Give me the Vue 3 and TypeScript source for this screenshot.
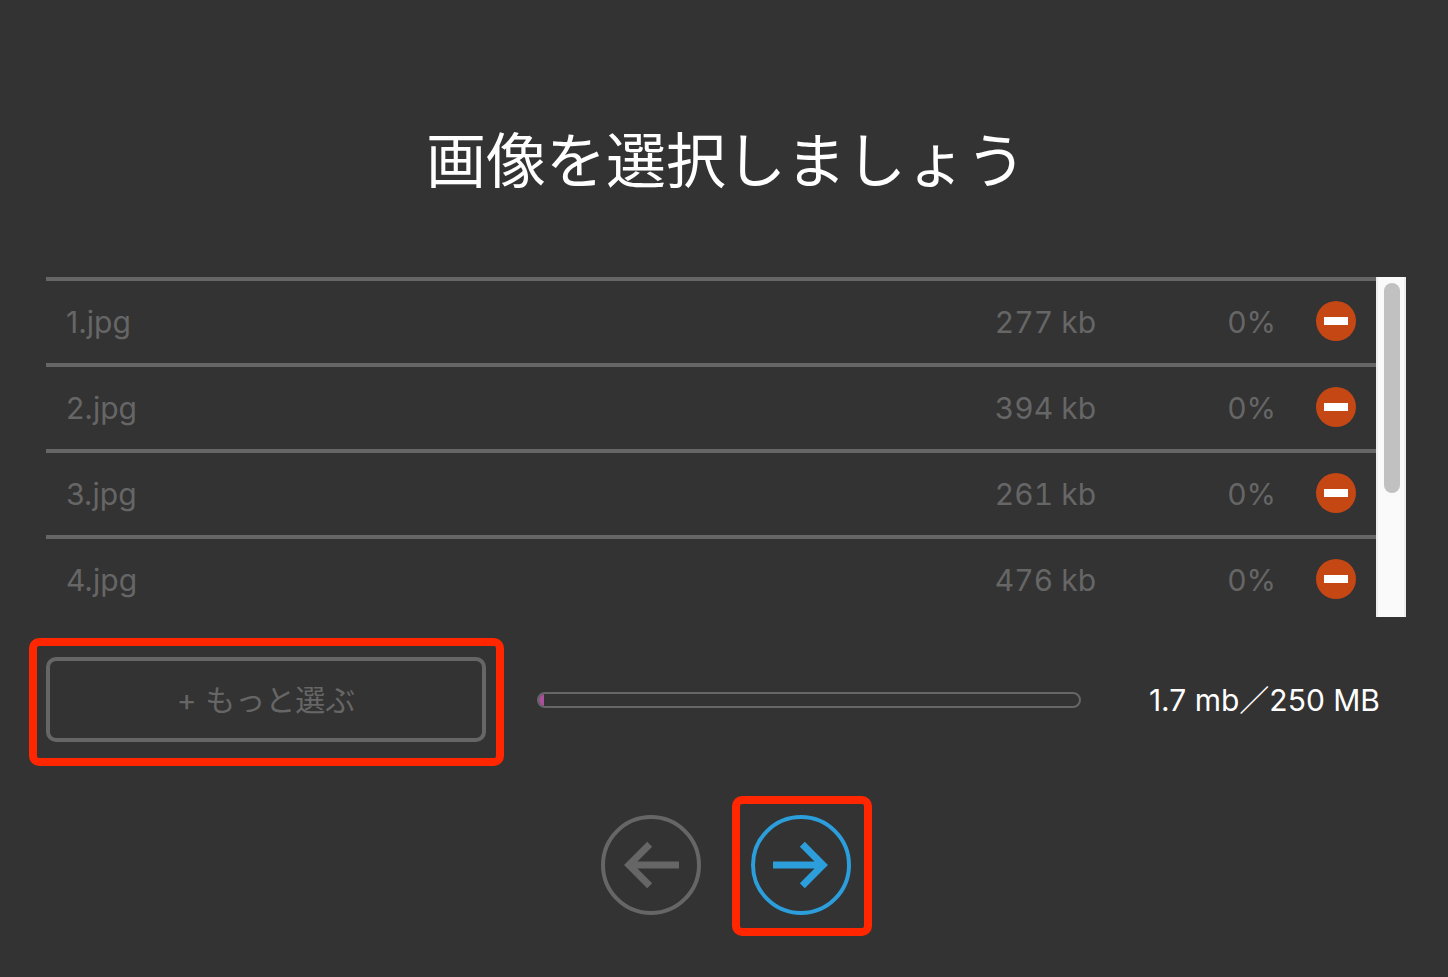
<script setup lang="ts">
interface UploadFile {
  name: string
  size: string
  progress: number
}

const files: UploadFile[] = [
  { name: '1.jpg', size: '277 kb', progress: 0 },
  { name: '2.jpg', size: '394 kb', progress: 0 },
  { name: '3.jpg', size: '261 kb', progress: 0 },
  { name: '4.jpg', size: '476 kb', progress: 0 },
]

const usedMb = 1.7
const limitMb = 250
const usedPercent = (usedMb / limitMb) * 100
</script>

<template>
  <main class="page">
    <h1 class="title">画像を選択しましょう</h1>

    <section class="list">
      <div class="list-view">
        <table class="files">
          <tbody>
            <tr v-for="file in files" :key="file.name">
              <td class="name">{{ file.name }}</td>
              <td class="size">{{ file.size }}</td>
              <td class="percent">{{ file.progress }}%</td>
              <td class="action">
                <button type="button" class="remove" :aria-label="file.name">
                  <svg viewBox="0 0 40 40" aria-hidden="true">
                    <circle cx="20" cy="20" r="20" fill="#c54714" />
                    <rect x="8" y="16" width="24" height="8" fill="#fff" />
                  </svg>
                </button>
              </td>
            </tr>
          </tbody>
        </table>
      </div>
      <div class="track" aria-hidden="true"><div class="thumb"></div></div>
    </section>

    <section class="summary">
      <div class="marked marked-more">
        <button type="button" class="more">+ もっと選ぶ</button>
      </div>
      <div class="meter">
        <div class="meter-fill" :style="{ width: usedPercent + '%' }"></div>
      </div>
      <p class="total">{{ usedMb }} mb／{{ limitMb }} MB</p>
    </section>

    <nav class="steps">
      <button type="button" class="step" aria-label="戻る">
        <svg viewBox="0 0 100 100" aria-hidden="true">
          <circle cx="50" cy="50" r="48" stroke-width="4" />
          <path d="M48.7 29.3 28 50l20.7 20.7M30 50h48" stroke-width="7" />
        </svg>
      </button>
      <div class="marked marked-next">
        <button type="button" class="step next" aria-label="次へ">
          <svg viewBox="0 0 100 100" aria-hidden="true">
            <circle cx="50" cy="50" r="48" stroke-width="4" />
            <path d="M51.3 29.3 72 50 51.3 70.7M70 50H22" stroke-width="7" />
          </svg>
        </button>
      </div>
    </nav>
  </main>
</template>

<style>
body {
  margin: 0;
  background: #333;
}
</style>

<style scoped>
.page {
  box-sizing: border-box;
  min-height: 100vh;
  padding: 121px 42px 60px 46px;
  background: #333;
  color: #666;
  font-family: Inter, "Noto Sans CJK JP", sans-serif;
  font-size: 30px;
  line-height: 40px;
}

.title {
  margin: 0 0 76px;
  color: #fff;
  font-size: 60px;
  font-weight: 400;
  line-height: 80px;
  text-align: center;
}

.list {
  display: flex;
  height: 340px;
}

.list-view {
  flex: 1;
  overflow-y: auto;
  scrollbar-width: none;
}

.files {
  width: 100%;
  border-collapse: separate;
  border-spacing: 0;
}

.files td {
  height: 82px;
  padding: 0;
  border-top: 4px solid #666;
}

.files .name {
  padding-left: 20px;
}

.size,
.percent {
  width: 180px;
  text-align: right;
}

.size {
  font-variant-numeric: tabular-nums;
}

.files .action {
  width: 100px;
  height: 80px;
  padding-bottom: 2px;
}

.remove {
  display: block;
  width: 40px;
  height: 40px;
  margin-left: 40px;
  padding: 0;
  border: 0;
  background: none;
  cursor: pointer;
}

.remove svg,
.step svg {
  display: block;
  width: 100%;
  height: 100%;
}

.track {
  box-sizing: border-box;
  width: 30px;
  padding: 6px;
  border: 0 solid #ededed;
  border-width: 0 2px;
  background: #fafafa;
}

.thumb {
  width: 16px;
  height: 210px;
  border-radius: 8px;
  background: #c1c1c1;
}

.summary {
  display: grid;
  grid-template-columns: 440px 1fr 274px;
  align-items: center;
  gap: 51px;
  margin-top: 40px;
}

.marked {
  position: relative;
}

.marked::after {
  content: "";
  position: absolute;
  border: 8px solid #ff2600;
  border-radius: 10px;
  pointer-events: none;
}

.marked-more::after {
  inset: -19px -18px -24px -17px;
}

.marked-next::after {
  inset: -19px -21px -21px -19px;
}

.more {
  display: block;
  width: 100%;
  height: 85px;
  padding: 0;
  border: 4px solid #666;
  border-radius: 10px;
  background: none;
  color: inherit;
  font: inherit;
  cursor: pointer;
}

.meter {
  box-sizing: border-box;
  height: 16px;
  border: 2px solid #666;
  border-radius: 8px;
  overflow: hidden;
}

.meter-fill {
  min-width: 5px;
  height: 100%;
  background: #a9519c;
}

.total {
  margin: 0;
  padding-right: 26px;
  color: #fff;
  text-align: right;
  white-space: nowrap;
}

.steps {
  display: flex;
  justify-content: center;
  gap: 50px;
  margin-top: 73px;
}

.step {
  display: block;
  width: 100px;
  height: 100px;
  padding: 0;
  border: 0;
  border-radius: 50%;
  background: none;
  color: #666;
  cursor: pointer;
}

.step svg {
  fill: none;
  stroke: currentColor;
}

.next {
  color: #2b9edb;
}
</style>
